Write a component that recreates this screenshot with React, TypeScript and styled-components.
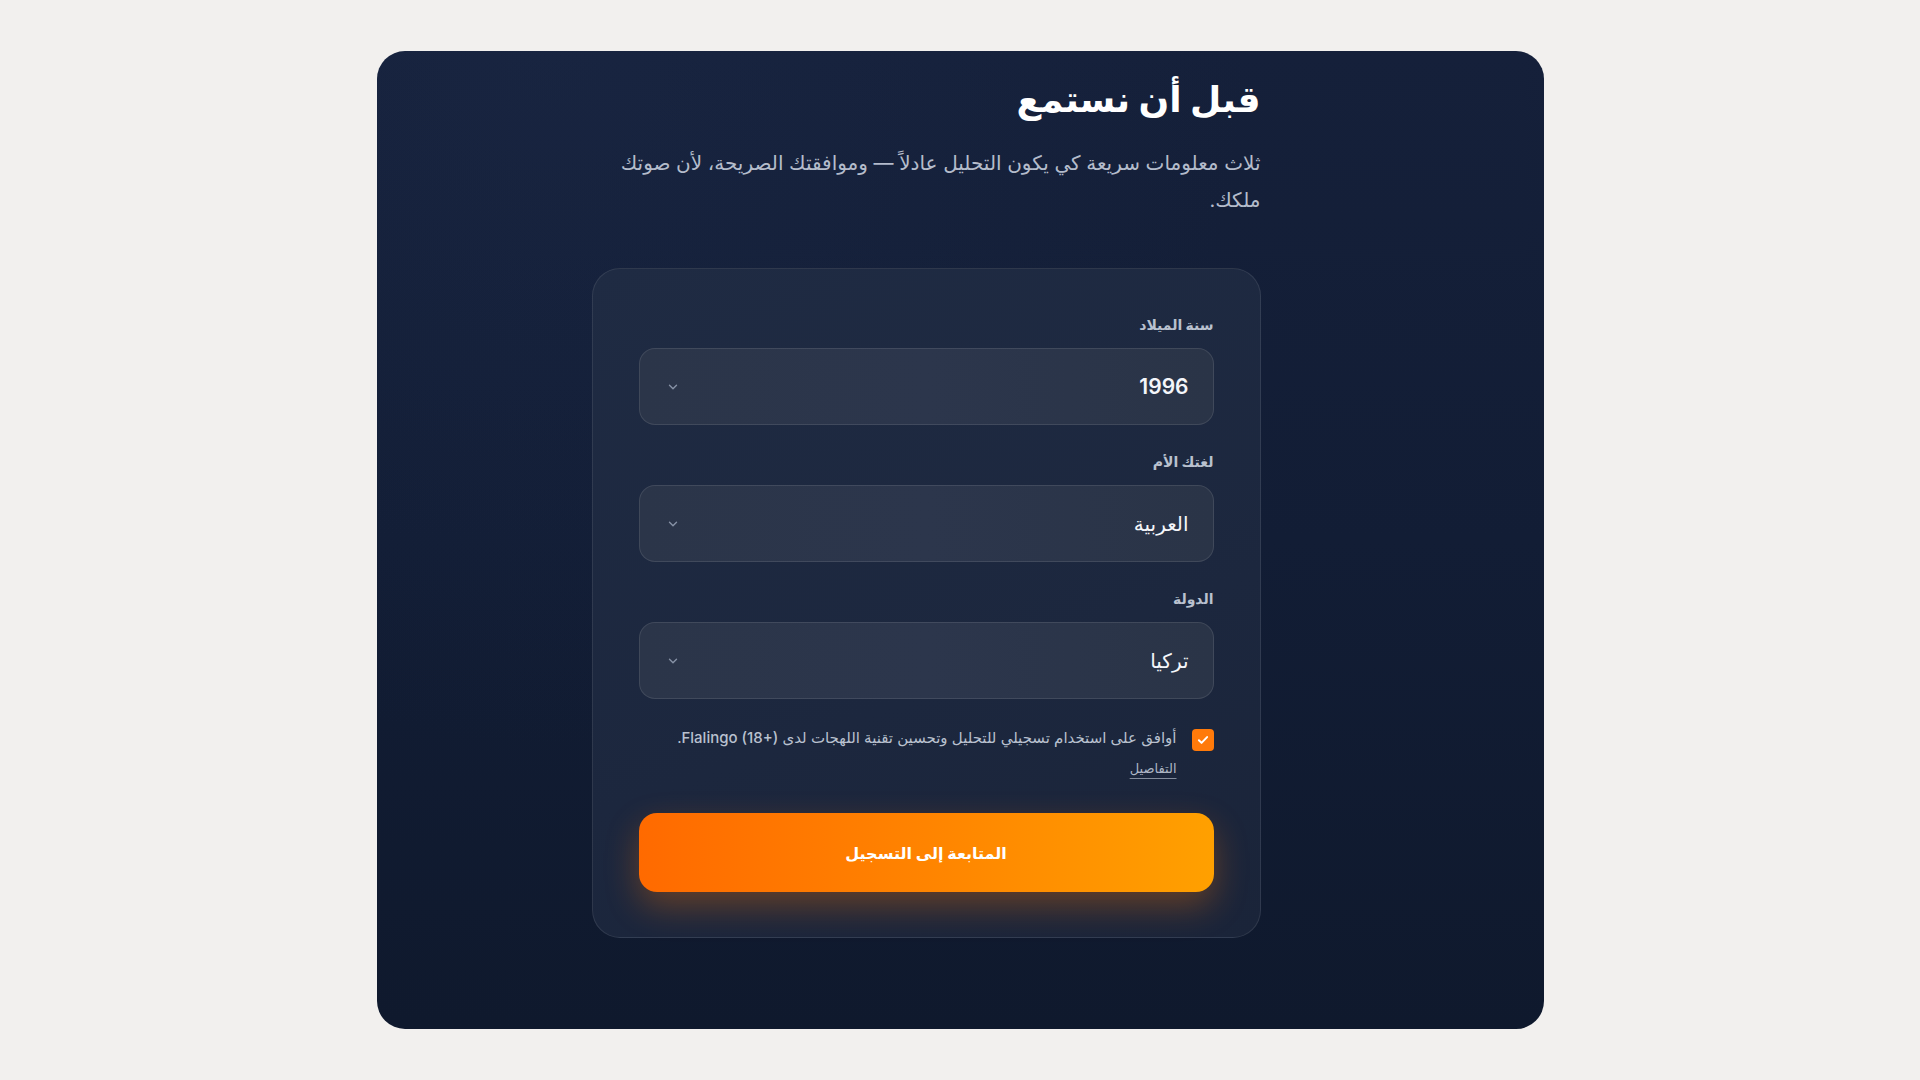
import styled, { createGlobalStyle } from "styled-components";
import { useState } from "react";

const GlobalStyle = createGlobalStyle`
  html, body {
    margin: 0;
    padding: 0;
    background: #f2f0ee;
  }
  * {
    box-sizing: border-box;
  }
`;

const Page = styled.div`
  min-height: 100vh;
  display: flex;
  align-items: center;
  justify-content: center;
  font-family: "Inter", "DejaVu Sans", sans-serif;
`;

const Shell = styled.main`
  width: 1167px;
  height: 978px;
  border-radius: 28px;
  padding: 20px 283px 0 216px;
  background:
    radial-gradient(circle at 15% 0%, rgba(34, 50, 84, 0.25), transparent 50%),
    linear-gradient(180deg, #15203a 0%, #121d35 50%, #0f192d 100%);
  display: flex;
  flex-direction: column;
  direction: rtl;
`;

const Title = styled.h1`
  margin: 0;
  font-size: 36px;
  line-height: 56px;
  font-weight: 700;
  color: #ffffff;
`;

const Lead = styled.p`
  margin: 18px 0 0;
  max-width: 670px;
  font-size: 20px;
  line-height: 37px;
  color: #b4bccb;
`;

const FormCard = styled.section`
  margin-top: 49px;
  width: 669px;
  padding: 45px 46px 45px;
  border-radius: 28px;
  border: 1px solid rgba(255, 255, 255, 0.09);
  background: linear-gradient(160deg, #1f2b43 0%, #1c273e 60%, #1a2439 100%);
  display: flex;
  flex-direction: column;
  gap: 26px;
`;

const Field = styled.label`
  display: flex;
  flex-direction: column;
  gap: 12px;
`;

const FieldLabel = styled.span`
  font-size: 14px;
  line-height: 22px;
  font-weight: 700;
  color: #b9c1cf;
`;

const SelectBox = styled.div`
  height: 77px;
  padding: 0 24px 0 26px;
  border-radius: 16px;
  border: 1px solid rgba(255, 255, 255, 0.1);
  background: linear-gradient(90deg, #2b3549 0%, #2c364c 50%, #2a3447 100%);
  display: flex;
  align-items: center;
  justify-content: space-between;
  color: #ffffff;
  cursor: pointer;
`;

const SelectValue = styled.span<{ $latin?: boolean }>`
  font-size: ${(p) => (p.$latin ? "21px" : "20px")};
  font-weight: ${(p) => (p.$latin ? 600 : 500)};
  color: #f4f6fa;
`;

const Chevron = styled.svg`
  width: 14px;
  height: 14px;
  color: #8792a6;
`;

const Consent = styled.div`
  display: flex;
  align-items: flex-start;
  gap: 15px;
  margin-top: -2px;
`;

const Check = styled.button<{ $on: boolean }>`
  flex: none;
  width: 22px;
  height: 22px;
  margin-top: 6px;
  padding: 0;
  border: none;
  border-radius: 4px;
  background: ${(p) => (p.$on ? "#ff7a0a" : "transparent")};
  box-shadow: ${(p) => (p.$on ? "none" : "inset 0 0 0 1px #6b768a")};
  display: flex;
  align-items: center;
  justify-content: center;
  cursor: pointer;
`;

const ConsentText = styled.p`
  margin: 0;
  font-size: 15px;
  line-height: 30px;
  color: #b9c1cf;
  bdi {
    font-family: "Inter", sans-serif;
    font-weight: 500;
  }
`;

const DetailsLink = styled.a`
  color: #aeb6c5;
  font-size: 13px;
  text-decoration: underline;
  text-underline-offset: 5px;
  text-decoration-color: rgba(174, 182, 197, 0.7);
`;

const Submit = styled.button`
  margin-top: 4px;
  height: 79px;
  border: none;
  border-radius: 18px;
  background: linear-gradient(90deg, #ff6a00 0%, #ff8400 50%, #ffa000 100%);
  box-shadow: 0 14px 34px rgba(255, 118, 0, 0.32);
  color: #ffffff;
  font-family: "Inter", "DejaVu Sans", sans-serif;
  font-size: 16px;
  font-weight: 700;
  cursor: pointer;
`;

const fields = [
  { label: "سنة الميلاد", value: "1996", latin: true },
  { label: "لغتك الأم", value: "العربية" },
  { label: "الدولة", value: "تركيا" },
];

function ChevronDown() {
  return (
    <Chevron viewBox="0 0 24 24" fill="none" stroke="currentColor" strokeWidth="2.4" strokeLinecap="round" strokeLinejoin="round">
      <path d="M6 9l6 6 6-6" />
    </Chevron>
  );
}

function App() {
  const [agree, setAgree] = useState(true);

  return (
    <>
      <GlobalStyle />
      <Page>
        <Shell>
          <Title>قبل أن نستمع</Title>
          <Lead>
            ثلاث معلومات سريعة كي يكون التحليل عادلاً — وموافقتك الصريحة، لأن صوتك ملكك.
          </Lead>
          <FormCard>
            {fields.map((f) => (
              <Field key={f.label}>
                <FieldLabel>{f.label}</FieldLabel>
                <SelectBox>
                  <SelectValue $latin={f.latin}>{f.value}</SelectValue>
                  <ChevronDown />
                </SelectBox>
              </Field>
            ))}
            <Consent>
              <Check $on={agree} onClick={() => setAgree(!agree)} aria-label="موافقة">
                {agree && (
                  <svg width="14" height="14" viewBox="0 0 24 24" fill="none" stroke="#fff" strokeWidth="3.4" strokeLinecap="round" strokeLinejoin="round">
                    <path d="M5 12.5l4.5 4.5L19 7" />
                  </svg>
                )}
              </Check>
              <ConsentText>
                أوافق على استخدام تسجيلي للتحليل وتحسين تقنية اللهجات لدى <bdi>Flalingo (18+)</bdi>.
                <br />
                <DetailsLink href="#">التفاصيل</DetailsLink>
              </ConsentText>
            </Consent>
            <Submit>المتابعة إلى التسجيل</Submit>
          </FormCard>
        </Shell>
      </Page>
    </>
  );
}

export default App;
